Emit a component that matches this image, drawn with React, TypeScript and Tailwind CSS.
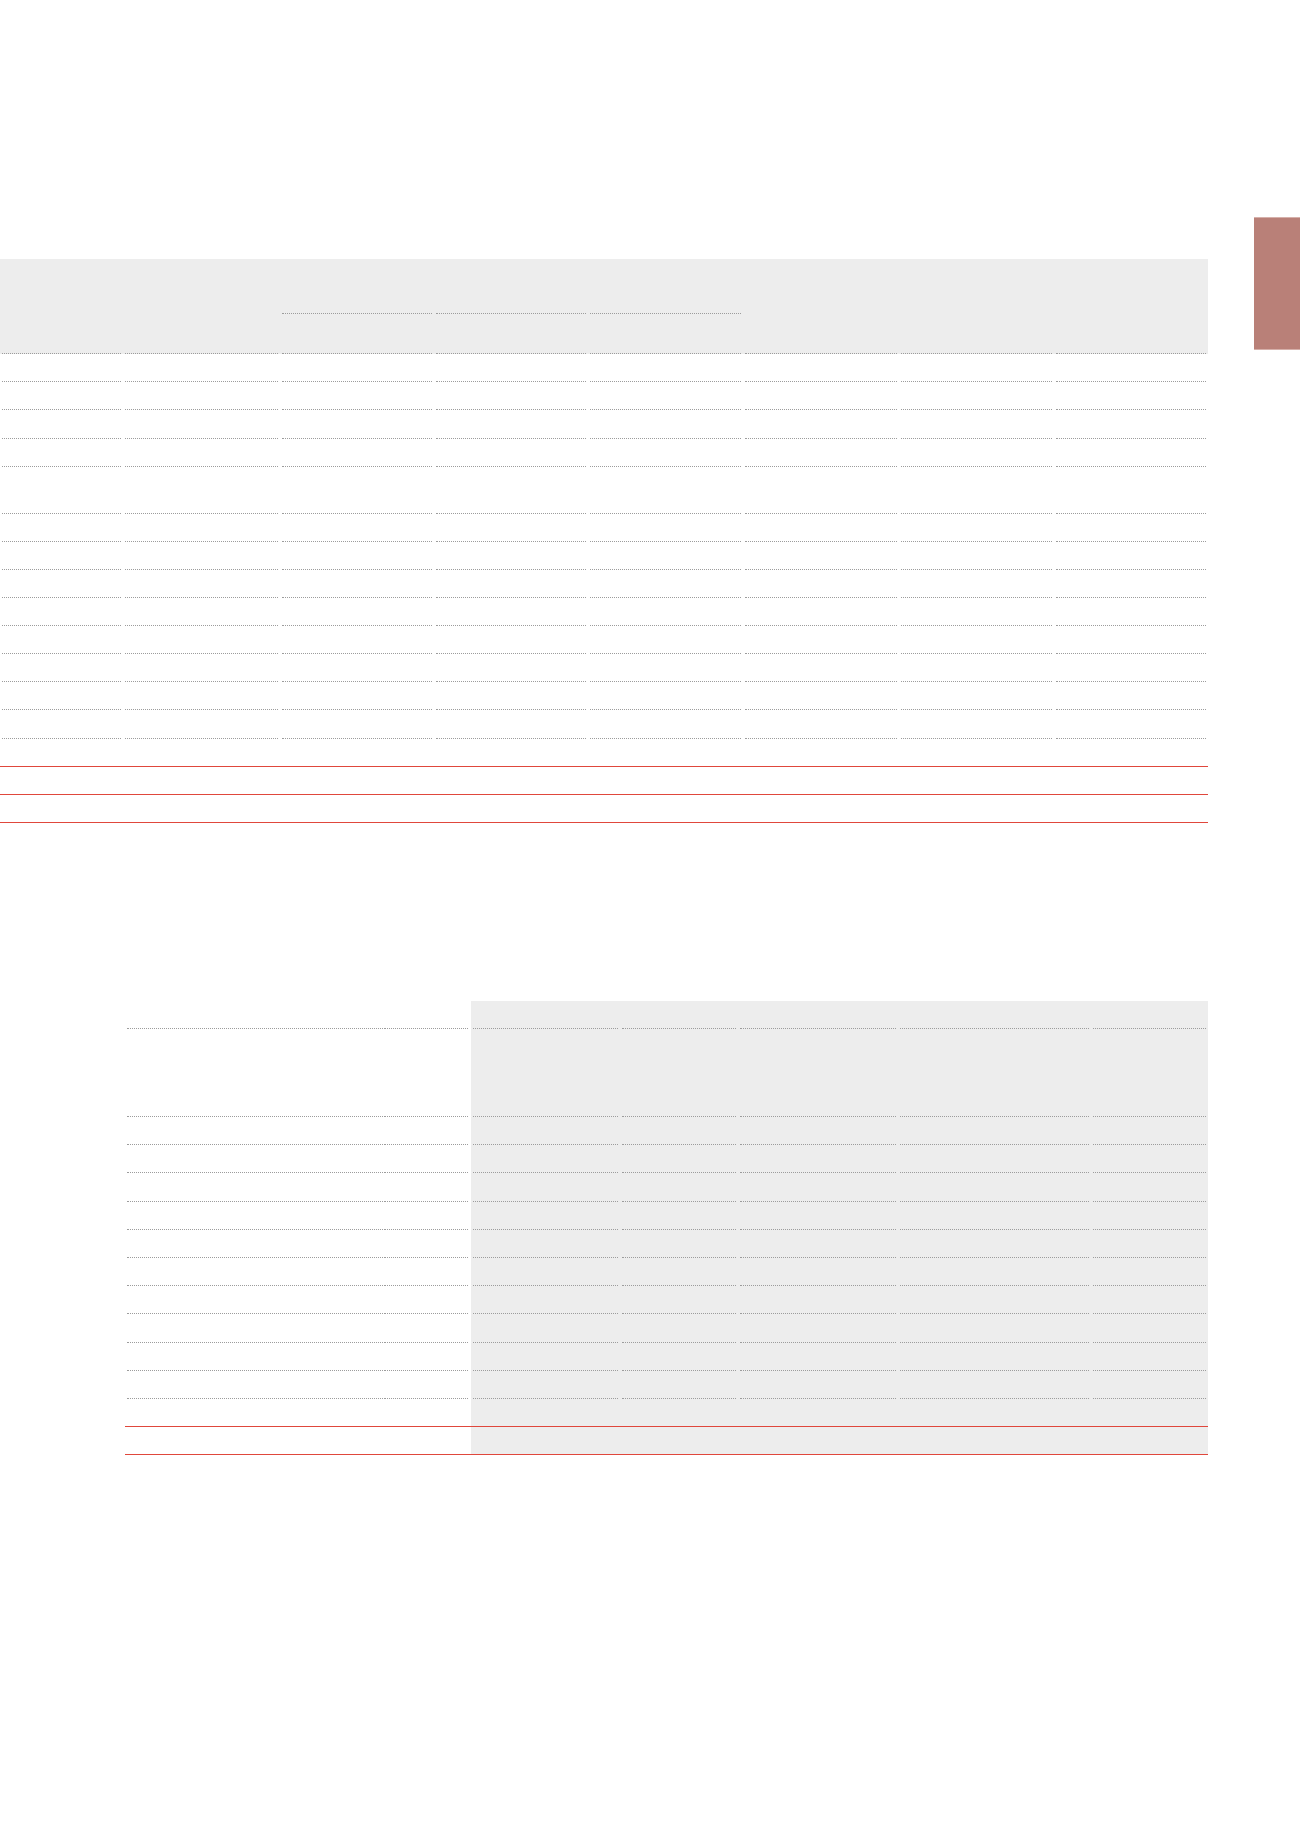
import React from 'react';

const dot = 'border-b border-dotted border-[#9c9c9c]';

const cols1 = 'grid grid-cols-[123px_157px_154px_154px_155px_156px_155px_154px]';
const cols2 = 'grid grid-cols-[259px_87px_149px_118px_160px_193px_117px]';

// one cell: dotted rule inset a little on each side
const Cell: React.FC<{ ruled?: boolean; gray?: boolean; pad?: string }> = ({ ruled = true, gray, pad = 'px-[2px]' }) => (
  <div className={`h-full ${pad} ${gray ? 'bg-[#ededed]' : ''}`}>
    <div className={`h-full ${ruled ? dot : ''}`} />
  </div>
);

const Row1: React.FC<{ h: string; red?: boolean }> = ({ h, red }) => (
  <div className={`${cols1} ${h} ${red ? 'border-b border-[#e0473c]' : ''}`}>
    {Array.from({ length: 8 }).map((_, i) => (
      <Cell key={i} ruled={!red} />
    ))}
  </div>
);

const Row2: React.FC<{ h: string; red?: boolean }> = ({ h, red }) => (
  <div className={`${cols2} ${h} ${red ? 'border-b border-[#e0473c]' : ''}`}>
    <Cell ruled={!red} pad="pl-[2px] pr-[1px]" />
    <Cell ruled={!red} pad="pl-0 pr-[3px]" />
    {Array.from({ length: 5 }).map((_, i) => (
      <Cell key={i} ruled={!red} gray />
    ))}
  </div>
);

const App: React.FC = () => {
  return (
    <div className="relative w-[1300px] h-[1839px] bg-white font-['Liberation_Sans',sans-serif]">
      {/* chapter tab */}
      <div className="absolute right-0 top-[217px] w-[46px] h-[133px] bg-[#b98078] border-y border-[#d6b0aa]" />

      {/* first table */}
      <div className="w-[1208px] pt-[259px]">
        <div className="bg-[#ededed]">
          <div className={`${cols1} h-[55px]`}>
            {Array.from({ length: 8 }).map((_, i) => (
              <Cell key={i} ruled={i >= 2 && i <= 4} />
            ))}
          </div>
          <Row1 h="h-[40px]" />
        </div>
        {[0, 1, 2, 3].map(i => (
          <Row1 key={`a${i}`} h="h-[28.2px]" />
        ))}
        <Row1 h="h-[47px]" />
        {[0, 1, 2, 3, 4, 5, 6, 7].map(i => (
          <Row1 key={`b${i}`} h="h-[28.1px]" />
        ))}
        {[0, 1, 2].map(i => (
          <Row1 key={`c${i}`} h="h-[28.2px]" red />
        ))}
      </div>

      {/* second table */}
      <div className="w-[1083px] ml-[125px] mt-[178px]">
        <Row2 h="h-[28px]" />
        <Row2 h="h-[88px]" />
        {Array.from({ length: 10 }).map((_, i) => (
          <Row2 key={`d${i}`} h="h-[28.2px]" />
        ))}
        {[0, 1].map(i => (
          <Row2 key={`e${i}`} h="h-[28px]" red />
        ))}
      </div>
    </div>
  );
};

export default App;
